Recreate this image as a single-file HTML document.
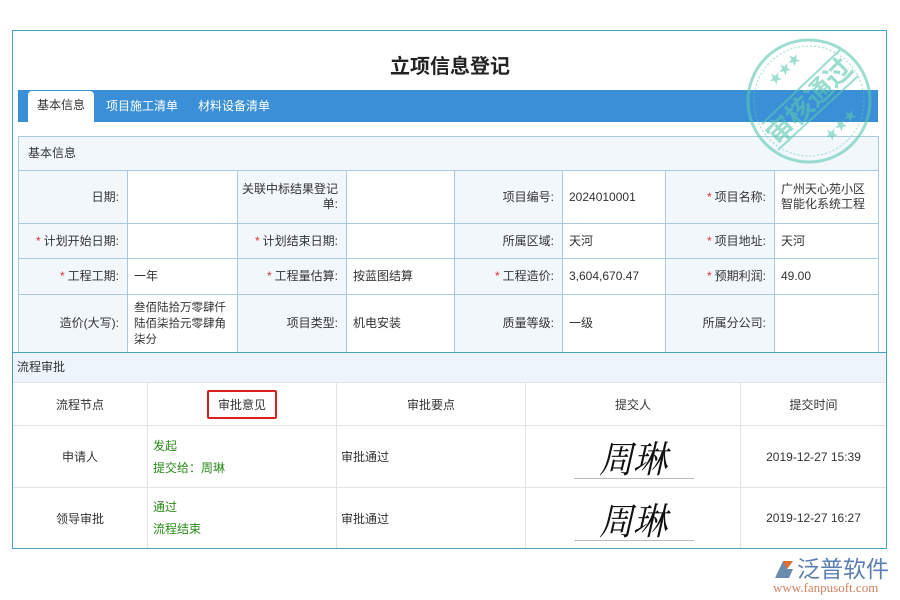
<!DOCTYPE html>
<html><head><meta charset="utf-8"><style>
*{margin:0;padding:0;box-sizing:border-box}
body{width:900px;height:600px;background:#fff;position:relative;overflow:hidden;font-family:"Liberation Sans","Noto Sans CJK SC",sans-serif;font-size:12px;color:#333}
.a{position:absolute}
.c{position:absolute;border-right:1px solid #a9c9de;border-bottom:1px solid #a9c9de;display:flex;align-items:center;line-height:15px}
.l{background:#f2f7fc;justify-content:flex-end;padding-right:8px;text-align:right}
.v{background:#fff;padding-left:6px}
.r{color:#d33;margin-right:3px}
.p{position:absolute;border-right:1px solid #e3e3e3;border-bottom:1px solid #e3e3e3;display:flex;align-items:center;justify-content:center;font-size:12px;color:#333}
.g{color:#2a8a1a;line-height:22px}
</style></head><body>
<div class="a" style="left:12px;top:30px;width:875px;height:519px;border:1px solid #4aa0c0"></div>
<div class="a" style="left:0;top:50px;width:900px;text-align:center;font-size:20px;font-weight:bold;color:#222">立项信息登记</div>
<div class="a" style="left:18px;top:90px;width:860px;height:32px;background:#3a8fd6"></div>
<div class="a" style="left:28px;top:91px;width:66px;height:31px;background:#fff;border-radius:4px 4px 0 0;text-align:center;line-height:29px;color:#333">基本信息</div>
<div class="a" style="left:106px;top:97px;color:#fff">项目施工清单</div>
<div class="a" style="left:198px;top:97px;color:#fff">材料设备清单</div>
<div class="a" style="left:18px;top:136px;width:861px;height:216px;border-left:1px solid #a9c9de;border-top:1px solid #a9c9de"></div>
<div class="c" style="left:19px;top:137px;width:860px;height:34px;background:#f2f7fc;padding-left:9px">基本信息</div>

<div class="c l" style="left:19px;top:171px;width:109px;height:53px">日期:</div>
<div class="c v" style="left:128px;top:171px;width:110px;height:53px"></div>
<div class="c l" style="left:238px;top:171px;width:109px;height:53px">关联中标结果登记<br>单:</div>
<div class="c v" style="left:347px;top:171px;width:108px;height:53px"></div>
<div class="c l" style="left:455px;top:171px;width:108px;height:53px">项目编号:</div>
<div class="c v" style="left:563px;top:171px;width:103px;height:53px">2024010001</div>
<div class="c l" style="left:666px;top:171px;width:109px;height:53px"><span class="r">*</span>项目名称:</div>
<div class="c v" style="left:775px;top:171px;width:104px;height:53px">广州天心苑小区<br>智能化系统工程</div>

<div class="c l" style="left:19px;top:224px;width:109px;height:35px"><span class="r">*</span>计划开始日期:</div>
<div class="c v" style="left:128px;top:224px;width:110px;height:35px"></div>
<div class="c l" style="left:238px;top:224px;width:109px;height:35px"><span class="r">*</span>计划结束日期:</div>
<div class="c v" style="left:347px;top:224px;width:108px;height:35px"></div>
<div class="c l" style="left:455px;top:224px;width:108px;height:35px">所属区域:</div>
<div class="c v" style="left:563px;top:224px;width:103px;height:35px">天河</div>
<div class="c l" style="left:666px;top:224px;width:109px;height:35px"><span class="r">*</span>项目地址:</div>
<div class="c v" style="left:775px;top:224px;width:104px;height:35px">天河</div>

<div class="c l" style="left:19px;top:259px;width:109px;height:36px"><span class="r">*</span>工程工期:</div>
<div class="c v" style="left:128px;top:259px;width:110px;height:36px">一年</div>
<div class="c l" style="left:238px;top:259px;width:109px;height:36px"><span class="r">*</span>工程量估算:</div>
<div class="c v" style="left:347px;top:259px;width:108px;height:36px">按蓝图结算</div>
<div class="c l" style="left:455px;top:259px;width:108px;height:36px"><span class="r">*</span>工程造价:</div>
<div class="c v" style="left:563px;top:259px;width:103px;height:36px">3,604,670.47</div>
<div class="c l" style="left:666px;top:259px;width:109px;height:36px"><span class="r">*</span>预期利润:</div>
<div class="c v" style="left:775px;top:259px;width:104px;height:36px">49.00</div>

<div class="c l" style="left:19px;top:295px;width:109px;height:57px;border-bottom:none">造价(大写):</div>
<div class="c v" style="left:128px;top:295px;width:110px;height:57px;border-bottom:none;font-size:11.5px;line-height:16px">叁佰陆拾万零肆仟陆佰柒拾元零肆角柒分</div>
<div class="c l" style="left:238px;top:295px;width:109px;height:57px;border-bottom:none">项目类型:</div>
<div class="c v" style="left:347px;top:295px;width:108px;height:57px;border-bottom:none">机电安装</div>
<div class="c l" style="left:455px;top:295px;width:108px;height:57px;border-bottom:none">质量等级:</div>
<div class="c v" style="left:563px;top:295px;width:103px;height:57px;border-bottom:none">一级</div>
<div class="c l" style="left:666px;top:295px;width:109px;height:57px;border-bottom:none">所属分公司:</div>
<div class="c v" style="left:775px;top:295px;width:104px;height:57px;border-bottom:none"></div>

<div class="a" style="left:13px;top:352px;width:873px;height:31px;background:#eef4fc;border-top:1px solid #4aa0c0;border-bottom:1px solid #e3e3e3;padding:5px 0 0 4px">流程审批</div>
<div class="p" style="left:13px;top:383px;width:135px;height:43px">流程节点</div>
<div class="p" style="left:148px;top:383px;width:189px;height:43px"><span style="border:2px solid #d92020;border-radius:2px;padding:4px 9px">审批意见</span></div>
<div class="p" style="left:337px;top:383px;width:189px;height:43px">审批要点</div>
<div class="p" style="left:526px;top:383px;width:215px;height:43px">提交人</div>
<div class="p" style="left:741px;top:383px;width:145px;height:43px;border-right:none">提交时间</div>

<div class="p" style="left:13px;top:426px;width:135px;height:62px">申请人</div>
<div class="p" style="left:148px;top:426px;width:189px;height:62px;justify-content:flex-start;padding-left:5px"><div class="g">发起<br>提交给：周琳</div></div>
<div class="p" style="left:337px;top:426px;width:189px;height:62px;justify-content:flex-start;padding-left:4px">审批通过</div>
<div class="p" style="left:526px;top:426px;width:215px;height:62px"><span style="font-family:'Liberation Serif','Noto Serif CJK SC',serif;font-style:italic;font-size:34px;color:#111;transform:scaleY(1.1)">周琳</span><div class="a" style="left:48px;top:52px;width:120px;height:1px;background:#bbb"></div></div>
<div class="p" style="left:741px;top:426px;width:145px;height:62px;border-right:none">2019-12-27 15:39</div>

<div class="p" style="left:13px;top:488px;width:135px;height:60px;border-bottom:none">领导审批</div>
<div class="p" style="left:148px;top:488px;width:189px;height:60px;border-bottom:none;justify-content:flex-start;padding-left:5px"><div class="g">通过<br>流程结束</div></div>
<div class="p" style="left:337px;top:488px;width:189px;height:60px;border-bottom:none;justify-content:flex-start;padding-left:4px">审批通过</div>
<div class="p" style="left:526px;top:488px;width:215px;height:60px;border-bottom:none"><span style="font-family:'Liberation Serif','Noto Serif CJK SC',serif;font-style:italic;font-size:34px;color:#111;transform:scaleY(1.1)">周琳</span><div class="a" style="left:48px;top:52px;width:120px;height:1px;background:#bbb"></div></div>
<div class="p" style="left:741px;top:488px;width:145px;height:60px;border-bottom:none;border-right:none">2019-12-27 16:27</div>

<svg class="a" style="left:744px;top:36px" width="130" height="130" viewBox="0 0 130 130" opacity="0.6">
<circle cx="65" cy="65" r="61" fill="none" stroke="#5cc8b0" stroke-width="3"/>
<circle cx="65" cy="65" r="55" fill="none" stroke="#5cc8b0" stroke-width="1" stroke-dasharray="2 2"/>
<line x1="18" y1="88" x2="98" y2="12" stroke="#5cc8b0" stroke-width="2"/>
<line x1="34" y1="114" x2="114" y2="40" stroke="#5cc8b0" stroke-width="2"/>
<text x="65" y="75" text-anchor="middle" transform="rotate(-45 65 65)" font-size="27" font-weight="bold" fill="#5cc8b0" font-family="Noto Sans CJK SC,sans-serif">审核通过</text>
<text x="30" y="50" font-size="13" fill="#5cc8b0" transform="rotate(-45 30 50)">★★★</text>
<text x="86" y="106" font-size="13" fill="#5cc8b0" transform="rotate(-45 86 106)">★★★</text>
</svg>

<svg class="a" style="left:773px;top:558px" width="24" height="22" viewBox="0 0 24 22"><path d="M2 20 L10 3 L20 3 L14 11 L20 11 L16 20 Z" fill="#6a8bb0"/><path d="M10 3 L20 3 L14 11 Z" fill="#e07030"/></svg>
<div class="a" style="left:797px;top:553px;font-size:23px;color:#5a7fb0;font-family:'Noto Sans CJK SC',sans-serif;line-height:28px">泛普软件</div>
<div class="a" style="left:773px;top:580px;font-size:13px;color:#d08060;font-family:'Liberation Serif',serif">www.fanpusoft.com</div>
</body></html>
